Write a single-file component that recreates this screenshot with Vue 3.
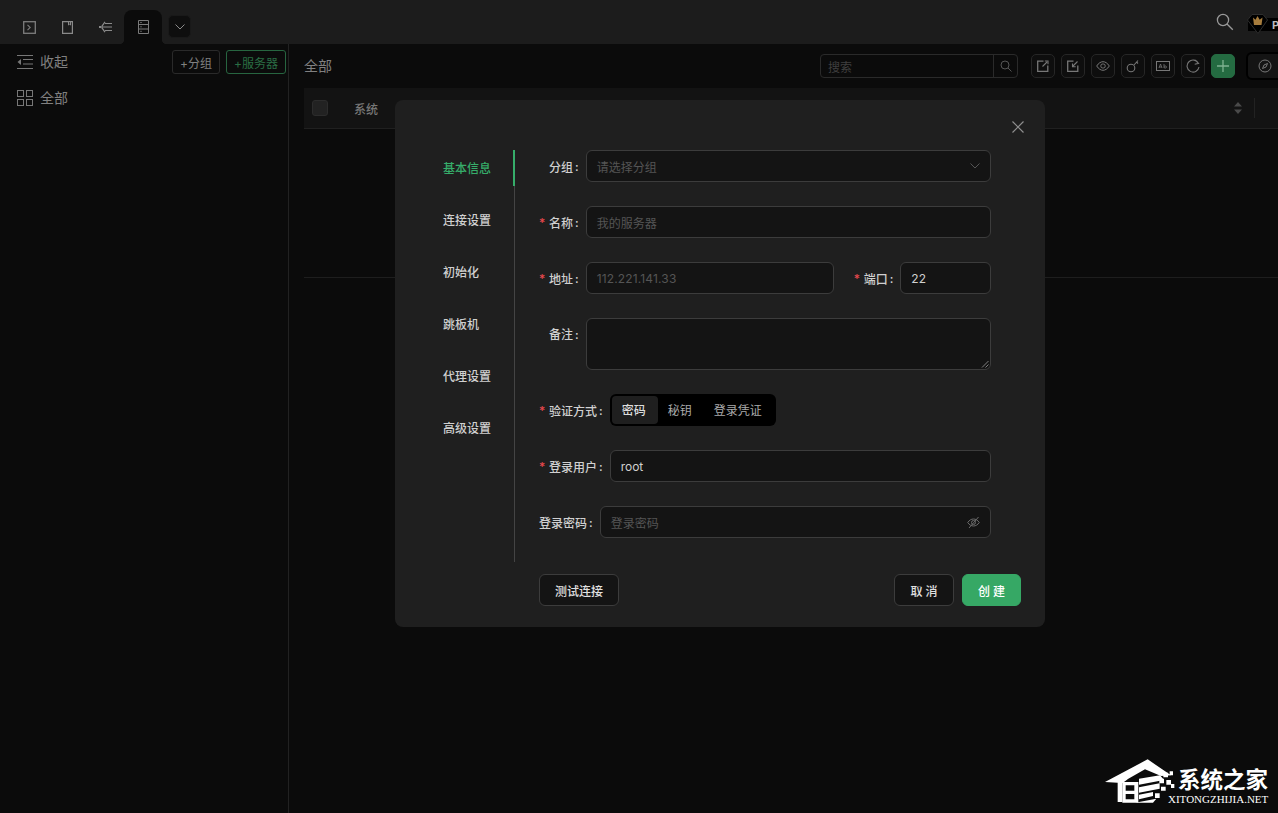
<script setup>
const navItems = ['基本信息', '连接设置', '初始化', '跳板机', '代理设置', '高级设置']
</script>

<template>
  <div class="app">
    <header class="topbar">
      <div class="tabs">
        <div class="tab">
          <svg width="13" height="13" viewBox="0 0 13 13" fill="none" stroke="#7d7d7d" stroke-width="1.3"><rect x=".7" y=".7" width="11.600" height="11.600"/><path d="M4.500 3.800 7.200 6.500 4.500 9.200" stroke-width="1.100"/></svg>
        </div>
        <div class="tab">
          <svg width="11" height="13" viewBox="0 0 11 13" fill="none" stroke="#8a8a8a" stroke-width="1.200"><path d="M.6.600h9.800v11.800H.6z"/><path d="M6.500.600v3.400l1-.8 1 .8V.6" stroke-width="1"/></svg>
        </div>
        <div class="tab">
          <svg width="13" height="12" viewBox="0 0 13 12" fill="none" stroke="#8a8a8a" stroke-width="1.200"><path d="M6 2.500h7M1 6h12M6 9.500h7M6 .8 2.800 5.400M6 11.200 2.800 6.600"/><path d="M0 6h2" stroke-width="1.800"/></svg>
        </div>
        <div class="tab tab-active">
          <svg width="11" height="14" viewBox="0 0 11 14" fill="none" stroke="#7a7a7a"><path d="M.5.500h10v13H.5zM.5 4.500h10M.5 9h10"/><path d="M2.500 2.500h1M2.500 6.800h1M2.500 11.300h1" stroke="#aaa"/></svg>
        </div>
        <div class="more">
          <svg width="10" height="6" viewBox="0 0 10 6" fill="none" stroke="#8a8a8a"><path d="m.5.5 4.500 4.500L9.500.5"/></svg>
        </div>
      </div>
      <div class="top-right">
        <svg class="top-search" width="18" height="18" viewBox="0 0 18 18" fill="none" stroke="#999" stroke-width="1.300"><circle cx="7" cy="7" r="5.600"/><path d="m11 11 5.800 5.800"/></svg>
        <div class="pro">
          <svg class="pro-gem" width="21" height="20" viewBox="0 0 21 20"><path d="M5 .5h11l4.500 5.500L11 19.500.5 6z" fill="#000" stroke="#2e2e2e"/><path d="M6 3.500l2.500 2.300L10.500 2l2.200 3.800L15.500 3.500l-1 7.500h-7.500z" fill="#a67c3d"/></svg>
          <span class="pro-text">P</span>
        </div>
      </div>
    </header>

    <div class="body">
      <aside class="sidebar">
        <div class="side-head">
          <div class="side-row">
            <svg width="16" height="14" viewBox="0 0 16 14" fill="none" stroke="#777"><path d="M0 .5h16M6 4.500h10M6 9h10M0 13.500h16"/><path d="M4 4v6L.5 7z" fill="#777" stroke="none"/></svg>
            <span class="side-text">收起</span>
          </div>
          <div class="side-actions">
            <button class="ghost">+分组</button>
            <button class="ghost ghost-green">+服务器</button>
          </div>
        </div>
        <div class="side-row side-row-all">
          <svg width="16" height="16" viewBox="0 0 16 16" fill="none" stroke="#777"><rect x=".5" y=".5" width="6" height="6"/><rect x="9.500" y=".5" width="6" height="6"/><rect x=".5" y="9.500" width="6" height="6"/><rect x="9.500" y="9.500" width="6" height="6"/></svg>
          <span class="side-text">全部</span>
        </div>
      </aside>

      <main class="main">
        <div class="toolbar">
          <span class="crumb">全部</span>
          <div class="tools">
            <div class="search">
              <span class="search-ph">搜索</span>
              <span class="search-btn">
                <svg width="12" height="12" viewBox="0 0 12 12" fill="none" stroke="#555"><circle cx="5" cy="5" r="4"/><path d="m8 8 3.500 3.500"/></svg>
              </span>
            </div>
            <div class="tool-group">
              <div class="tool">
                <svg width="12" height="12" viewBox="0 0 12 12" fill="none" stroke="#777" stroke-width="1.300"><path d="M6.500 1.200H.7v10.100h10.100V5.500"/><path d="M5.500 6.500 10 2M7.800 1h3.200v3.200" stroke-width="1.100"/></svg>
              </div>
              <div class="tool">
                <svg width="12" height="12" viewBox="0 0 12 12" fill="none" stroke="#777" stroke-width="1.300"><path d="M6.500 1.200H.7v10.100h10.100V5.500"/><path d="M10.500 1.500 6 6M5.500 3.500v3.200h3.200" stroke-width="1.100"/></svg>
              </div>
              <div class="tool">
                <svg width="14" height="10" viewBox="0 0 14 10" fill="none" stroke="#777"><path d="M.7 5C2.500 2 5 .7 7 .7S11.500 2 13.300 5C11.500 8 9 9.300 7 9.300S2.500 8 .7 5z"/><rect x="4.800" y="3" width="4.400" height="4" rx="1.800"/></svg>
              </div>
              <div class="tool">
                <svg width="14" height="14" viewBox="0 0 14 14" fill="none" stroke="#777" stroke-width="1.100"><circle cx="5" cy="9" r="3.800"/><path d="m8 6 4-4.500M10.500 3l1.500 1.500"/></svg>
              </div>
              <div class="tool">
                <svg width="14" height="12" viewBox="0 0 14 12" fill="none" stroke="#777"><rect x=".5" y="1.500" width="13" height="9"/><path d="m3 8 1.500-4L6 8M3.500 7h2M8 4v4M8 6.500c1-1 2.500-.5 2.500.5S9 8.500 8 7.500" stroke-width=".8"/></svg>
              </div>
              <div class="tool">
                <svg width="14" height="14" viewBox="0 0 14 14" fill="none" stroke="#777" stroke-width="1.100"><path d="M12.500 4.500A6 6 0 1 0 13 8M9.200 1l3.300 3.400-3.800.8"/></svg>
              </div>
              <div class="tool tool-add">
                <svg width="12" height="12" viewBox="0 0 12 12" fill="none" stroke="#7fb391" stroke-width="1.300"><path d="M6 0v12M0 6h12"/></svg>
              </div>
            </div>
            <div class="view-btn">
              <svg width="14" height="14" viewBox="0 0 14 14" fill="none" stroke="#777"><circle cx="7" cy="7" r="6"/><path d="m9.500 4.500-1.500 3.500-3.500 1.500L6 6z"/></svg>
            </div>
          </div>
        </div>

        <div class="table">
          <div class="thead">
            <span class="checkbox"></span>
            <span class="th-label">系统</span>
            <span class="sorter">
              <svg width="8" height="12" viewBox="0 0 8 12" fill="#4a4a4a"><path d="M4 0l4 4.500H0zM4 12 0 7.500h8z"/></svg>
            </span>
            <span class="th-sep"></span>
          </div>
          <div class="tbody"></div>
        </div>
      </main>
    </div>

    <section class="modal">
      <button class="close" aria-label="close">
        <svg width="12" height="12" viewBox="0 0 12 12" fill="none" stroke="#8f8f8f" stroke-width="1.200"><path d="m.5.500 11 11M11.500.5l-11 11"/></svg>
      </button>
      <div class="modal-main">
        <nav class="nav">
          <div
            v-for="(item, i) in navItems"
            :key="item"
            class="nav-item"
            :class="{ 'nav-active': i === 0 }"
          >{{ item }}</div>
        </nav>
        <form class="form" @submit.prevent>
          <div class="row">
            <label class="label indent">分组<span class="colon">:</span></label>
            <div class="input select">
              <span class="ph">请选择分组</span>
              <svg width="10" height="6" viewBox="0 0 10 6" fill="none" stroke="#555"><path d="m.5.5 4.500 4.500L9.500.5"/></svg>
            </div>
          </div>
          <div class="row">
            <label class="label"><i class="star">*</i>名称<span class="colon">:</span></label>
            <div class="input"><span class="ph">我的服务器</span></div>
          </div>
          <div class="row">
            <label class="label"><i class="star">*</i>地址<span class="colon">:</span></label>
            <div class="input input-addr"><span class="ph ph-num">112.221.141.33</span></div>
            <label class="label label-port"><i class="star">*</i>端口<span class="colon">:</span></label>
            <div class="input input-port"><span class="val">22</span></div>
          </div>
          <div class="row row-top">
            <label class="label indent label-top">备注<span class="colon">:</span></label>
            <div class="input textarea">
              <svg class="grip" width="8" height="8" viewBox="0 0 8 8" fill="none" stroke="#999" stroke-width=".8"><path d="M1 7.500 7.500 1M4.500 7.500l3-3"/></svg>
            </div>
          </div>
          <div class="row">
            <label class="label"><i class="star">*</i>验证方式<span class="colon">:</span></label>
            <div class="segment">
              <span class="seg seg-active">密码</span>
              <span class="seg">秘钥</span>
              <span class="seg">登录凭证</span>
            </div>
          </div>
          <div class="row">
            <label class="label"><i class="star">*</i>登录用户<span class="colon">:</span></label>
            <div class="input"><span class="val">root</span></div>
          </div>
          <div class="row">
            <label class="label">登录密码<span class="colon">:</span></label>
            <div class="input input-pass">
              <span class="ph">登录密码</span>
              <svg width="13" height="13" viewBox="0 0 13 13" fill="none" stroke="#6a6a6a"><path d="M.7 6.500C2.300 4.100 4.400 3 6.500 3s4.200 1.100 5.800 3.500C10.700 8.900 8.600 10 6.500 10S2.300 8.900.7 6.500z"/><circle cx="6.500" cy="6.500" r="2"/><path d="M2 12 11.500 1"/></svg>
            </div>
          </div>
        </form>
      </div>
      <footer class="footer">
        <button class="btn">测试连接</button>
        <div class="footer-right">
          <button class="btn btn-spaced">取 消</button>
          <button class="btn btn-primary">创 建</button>
        </div>
      </footer>
    </section>

    <div class="watermark">
      <svg width="85" height="58" viewBox="0 0 255 174" fill="#fff">
        <path d="M30 90 158 22 228 70 198 72 150 52 100 80 82 94V150H68V92z"/>
        <path fill-rule="evenodd" d="M82 90h48v62H82zM92 100v16h26V100zM92 126v16h26v-16z"/>
        <path d="M132 80 195 70 207 84 132 98zM132 106 194 94V110L132 122zM132 128 174 120V132L132 142zM120 152 184 140 174 152z"/>
        <path d="M205 62h14v14h-14zM224 58h10v12h-10zM193 80h14v14h-14zM214 84h14v14h-14zM198 104h14v12h-14zM228 96h10v12h-10zM180 124h14v14h-14z"/>
      </svg>
      <div class="wm-text">
        <span class="wm-cn">系统之家</span>
        <span class="wm-en">XITONGZHIJIA.NET</span>
      </div>
    </div>
  </div>
</template>

<style>
html, body { margin: 0; background: #0b0b0b; }
</style>

<style scoped>
.app {
  position: relative;
  width: 1278px;
  height: 813px;
  overflow: hidden;
  background: #0b0b0b;
  font-family: Inter, "Noto Sans CJK SC", sans-serif;
  font-size: 12px;
  color: #ccc;
}
.topbar {
  height: 44px;
  background: #1c1c1c;
  display: flex;
  justify-content: space-between;
  align-items: flex-end;
}
.tabs { display: flex; align-items: flex-end; padding-left: 10px; }
.tab {
  width: 38px;
  height: 34px;
  display: flex;
  align-items: center;
  justify-content: center;
  position: relative;
}
.tab-active { background: #0b0b0b; border-radius: 8px 8px 0 0; }
.tab-active::before,
.tab-active::after {
  content: "";
  position: absolute;
  bottom: 0;
  width: 5px;
  height: 5px;
}
.tab-active::before {
  left: -5px;
  background: radial-gradient(circle at 0 0, transparent 5px, #0b0b0b 5.500px);
}
.tab-active::after {
  right: -5px;
  background: radial-gradient(circle at 100% 0, transparent 5px, #0b0b0b 5.500px);
}
.more {
  width: 23px;
  height: 23px;
  box-sizing: border-box;
  margin: 0 0 6px 6px;
  background: #0e0e0e;
  border: 1px solid #191919;
  border-radius: 5px;
  display: flex;
  align-items: center;
  justify-content: center;
}
.top-right {
  display: flex;
  align-items: center;
  height: 44px;
  width: 62px;
  flex: none;
  position: relative;
}
.top-search { position: absolute; left: 0; top: 13px; }
.pro {
  position: absolute;
  left: 32px;
  top: 18px;
  width: 30px;
  height: 13px;
  background: #000;
  display: flex;
  align-items: center;
}
.pro-gem { position: absolute; left: -1px; top: -4px; }
.pro-text {
  position: absolute;
  left: 24px;
  font-weight: 700;
  font-size: 11px;
  color: #bbb;
}

.body { display: flex; height: 769px; }
.sidebar {
  width: 288px;
  border-right: 1px solid #222;
  flex: none;
  color: #888;
}
.side-head {
  height: 36px;
  display: flex;
  align-items: center;
  justify-content: space-between;
  padding: 0 2px 0 17px;
}
.side-row {
  display: flex;
  align-items: center;
  gap: 7px;
  font-size: 14px;
  color: #808080;
}
.side-text { margin-top: -2px; }
.side-row-all { padding: 4px 0 0 17px; height: 28px; }
.side-actions { display: flex; gap: 6px; }
.ghost {
  height: 24px;
  padding: 0 7px;
  background: transparent;
  border: 1px solid #2a2a2a;
  border-radius: 3px;
  color: #808080;
  font: inherit;
  font-size: 12px;
}
.ghost-green { border-color: #276540; color: #2a6e44; }

.main { flex: 1; min-width: 0; padding-left: 15px; overflow: hidden; }
.toolbar {
  height: 44px;
  display: flex;
  align-items: center;
  justify-content: space-between;
}
.crumb { font-size: 14px; color: #808080; margin-top: -2px; }
.tools {
  display: flex;
  align-items: center;
  margin-right: -28px;
}
.search {
  width: 198px;
  height: 24px;
  box-sizing: border-box;
  border: 1px solid #2a2a2a;
  border-radius: 4px;
  display: flex;
  align-items: center;
  justify-content: space-between;
  padding-left: 7px;
}
.search-ph { color: #3f3f3f; }
.search-btn {
  width: 23px;
  height: 22px;
  border-left: 1px solid #2a2a2a;
  display: flex;
  align-items: center;
  justify-content: center;
}
.tool-group { display: flex; gap: 6px; margin-left: 13px; }
.tool {
  width: 24px;
  height: 24px;
  box-sizing: border-box;
  background: #0e0e0e;
  border: 1px solid #262626;
  border-radius: 5px;
  display: flex;
  align-items: center;
  justify-content: center;
}
.tool-add { background: #246b41; border-color: #246b41; }
.view-btn {
  width: 60px;
  height: 28px;
  box-sizing: border-box;
  margin-left: 11px;
  background: #141414;
  border: 2px solid #000;
  border-radius: 6px;
  display: flex;
  align-items: center;
  padding-left: 10px;
  flex: none;
}
.table { border-bottom: 1px solid #1e1e1e; }
.thead {
  height: 41px;
  background: #131313;
  border-bottom: 1px solid #202020;
  display: flex;
  align-items: center;
  box-sizing: border-box;
  padding-left: 8px;
}
.checkbox {
  width: 16px;
  height: 16px;
  box-sizing: border-box;
  background: #222;
  border: 1px solid #2c2c2c;
  border-radius: 3px;
}
.th-label { margin-left: 26px; font-weight: 500; color: #777; }
.sorter { margin-left: auto; display: flex; }
.th-sep {
  width: 1px;
  height: 20px;
  background: #222;
  margin: 0 23px 0 12px;
}
.tbody { height: 148px; }

.modal {
  position: absolute;
  left: 395px;
  top: 100px;
  width: 650px;
  height: 527px;
  box-sizing: border-box;
  background: #1f1f1f;
  border-radius: 8px;
  padding: 50px 24px 21px 48px;
}
.close {
  position: absolute;
  top: 21px;
  right: 21px;
  width: 12px;
  height: 12px;
  padding: 0;
  background: none;
  border: 0;
  display: flex;
}
.modal-main { display: flex; height: 412px; }
.nav {
  width: 72px;
  box-sizing: border-box;
  border-right: 1px solid #444;
  flex: none;
  position: relative;
}
.nav-item {
  height: 36px;
  line-height: 38px;
  margin-bottom: 16px;
  font-weight: 500;
  color: #d0d0d0;
  position: relative;
}
.nav-active { color: #36ad6a; }
.nav-active::after {
  content: "";
  position: absolute;
  right: -1px;
  top: 0;
  width: 2px;
  height: 36px;
  background: #36ad6a;
}
.form {
  margin-left: 24px;
  width: 452px;
  display: flex;
  flex-direction: column;
  gap: 24px;
}
.row { display: flex; align-items: center; height: 32px; }
.row-top { height: 52px; align-items: flex-start; }
.label {
  flex: none;
  margin-right: 7px;
  font-weight: 500;
  color: #d0d0d0;
  white-space: nowrap;
  display: flex;
  align-items: center;
}
.colon { margin-left: 2px; }
.label-top { line-height: 34px; }
.indent { padding-left: 10px; }
.label-port { margin-left: 20px; }
.star {
  width: 10px;
  font-style: normal;
  color: #e5484d;
  font-size: 12px;
}
.input {
  flex: 1;
  min-width: 0;
  height: 32px;
  box-sizing: border-box;
  background: #141414;
  border: 1px solid #3c3c3c;
  border-radius: 6px;
  display: flex;
  align-items: center;
  justify-content: space-between;
  padding: 0 10px 0 10px;
}
.input-addr { flex: none; width: 248px; }
.input-port { flex: none; width: 91px; }
.textarea { height: 52px; position: relative; }
.grip { position: absolute; right: 1px; bottom: 1px; }
.ph { color: #555; }
.ph-num { letter-spacing: .15px; }
.val { color: #d0d0d0; font-size: 12px; }
.segment {
  height: 32px;
  box-sizing: border-box;
  padding: 2px;
  background: #000;
  border-radius: 6px;
  display: flex;
}
.seg {
  height: 28px;
  padding: 0 12px 0 10px;
  line-height: 30px;
  color: #aaa;
  border-radius: 4px;
}
.seg-active { background: #1f1f1f; color: #ddd; font-weight: 500; }
.footer {
  display: flex;
  justify-content: space-between;
  margin-top: 12px;
  padding-left: 96px;
}
.footer-right { display: flex; gap: 8px; }
.btn {
  height: 32px;
  padding: 0 15px;
  background: #141414;
  border: 1px solid #3c3c3c;
  border-radius: 6px;
  font: inherit;
  font-weight: 500;
  color: #e0e0e0;
}
.btn-spaced { width: 60px; padding: 0; }
.btn-primary {
  width: 59px;
  padding: 0;
  background: #36a865;
  border-color: #36a865;
  color: #fff;
}

.watermark {
  position: absolute;
  left: 1095px;
  top: 752px;
  display: flex;
  color: #fff;
}
.wm-text { display: flex; flex-direction: column; position: relative; }
.wm-cn {
  margin: 15px 0 0 -2px;
  font-size: 22.500px;
  line-height: 26px;
  font-weight: 700;
  white-space: nowrap;
}
.wm-en {
  position: absolute;
  left: -12px;
  top: 42px;
  font-family: "Liberation Serif", serif;
  font-size: 11px;
  line-height: 11px;
  white-space: nowrap;
}
</style>
